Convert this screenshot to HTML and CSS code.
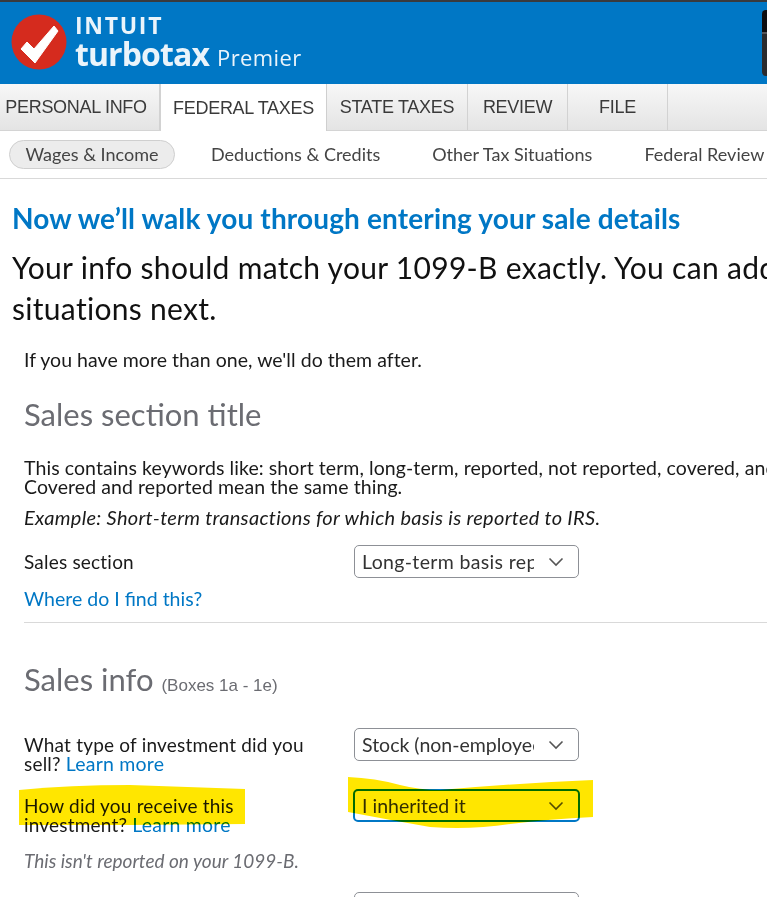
FILE: index.html
```html
<!DOCTYPE html>
<html lang="en">
<head>
<meta charset="utf-8">
<title>TurboTax Premier</title>
<link rel="stylesheet" href="styles.css">
</head>
<body>
<div class="page">
  <header class="brand">
    <svg class="logo" width="56" height="56" viewBox="0 0 56 56" aria-hidden="true">
      <circle cx="28" cy="28" r="27.5" fill="#d52b1e"/>
      <path d="M10 35 L16 28 L23 35 L43 12 L47 17 L24 49 Z" fill="#fff" stroke="#fff" stroke-width="1" stroke-linejoin="round"/>
    </svg>
    <div class="wordmark">
      <div class="intuit">INTUIT</div>
      <div class="product"><span class="turbotax">turbotax</span><span class="premier">Premier</span></div>
    </div>
    <span class="corner"></span>
  </header>
  <nav class="tabs">
    <a class="tab tab-personal">PERSONAL INFO</a>
    <a class="tab tab-federal active">FEDERAL TAXES</a>
    <a class="tab tab-state">STATE TAXES</a>
    <a class="tab tab-review">REVIEW</a>
    <a class="tab tab-file">FILE</a>
  </nav>
  <nav class="subnav">
    <a class="pill">Wages &amp; Income</a>
    <a class="sub sub-ded">Deductions &amp; Credits</a>
    <a class="sub sub-other">Other Tax Situations</a>
    <a class="sub sub-review">Federal Review</a>
  </nav>
  <main class="content">
    <h1 class="title">Now we’ll walk you through entering your sale details</h1>
    <p class="lead">Your info should match your 1099-B exactly. You can add more sales or other situations next.</p>
    <section class="form">
      <p class="more">If you have more than one, we'll do them after.</p>
      <h2 class="section-title">Sales section title</h2>
      <p class="keywords">This contains keywords like: short term, long-term, reported, not reported, covered, and noncovered. Covered and reported mean the same thing.</p>
      <p class="example">Example: Short-term transactions for which basis is reported to IRS.</p>
      <div class="row row-sales">
        <label class="label">Sales section</label>
        <div class="select"><span class="value spaced">Long-term basis reported</span><svg class="chev" width="16" height="10" viewBox="0 0 16 10"><path d="M1.5 1.5 L8 8 L14.5 1.5" fill="none" stroke="#555" stroke-width="1.6"/></svg></div>
      </div>
      <a class="link find">Where do I find this?</a>
      <hr class="rule">
      <h2 class="section-title info">Sales info <small class="boxes">(Boxes 1a - 1e)</small></h2>
      <div class="row row-type">
        <label class="label two">What type of investment did you sell? <a class="link">Learn more</a></label>
        <div class="select"><span class="value">Stock (non-employee)</span><svg class="chev" width="16" height="10" viewBox="0 0 16 10"><path d="M1.5 1.5 L8 8 L14.5 1.5" fill="none" stroke="#555" stroke-width="1.6"/></svg></div>
      </div>
      <div class="row row-how">
        <label class="label two">How did you receive this investment? <a class="link">Learn more</a></label>
        <div class="select focus"><span class="value">I inherited it</span><svg class="chev" width="16" height="10" viewBox="0 0 16 10"><path d="M1.5 1.5 L8 8 L14.5 1.5" fill="none" stroke="#555" stroke-width="1.6"/></svg></div>
      </div>
      <p class="note">This isn't reported on your 1099-B.</p>
      <div class="select cut"></div>
    </section>
  </main>
  <svg class="marker" width="767" height="913" viewBox="0 0 767 913" aria-hidden="true">
    <path d="M19 790 Q70 785 130 785 L245 789 L245 824 L130 825 L19 825 Z" fill="#ffe600"/>
    <path d="M348 777 Q375 778 400 785 Q420 790 440 790 Q520 783 593 780 L593 817 Q550 819 510 824 Q470 830 430 827 Q390 820 348 812 Z" fill="#ffe600"/>
  </svg>
</div>
</body>
</html>
```
FILE: styles.css
```css
* { box-sizing: border-box; }
html, body { margin: 0; padding: 0; background: #fff; }
body { font-family: Lato, "Open Sans", sans-serif; color: #1a1a1a; }
.page { position: relative; width: 767px; height: 913px; overflow: hidden; }

.brand { position: relative; display: flex; align-items: flex-start; height: 84px; padding: 12px 0 0 11px; gap: 8px; background: #0077c5; border-top: 2px solid #393a3d; }
.logo { flex: none; }
.wordmark { color: #eaf4fb; font-family: "Open Sans", sans-serif; }
.intuit { font-size: 23px; line-height: 22px; font-weight: 700; letter-spacing: 1.7px; }
.product { display: flex; align-items: baseline; gap: 8px; margin-top: 0; }
.turbotax { font-size: 32px; line-height: 36px; font-weight: 700; letter-spacing: -0.9px; }
.premier { font-size: 22px; font-weight: 400; letter-spacing: 0.4px; }
.corner { position: absolute; left: 762px; top: 8px; width: 10px; height: 66px; border-radius: 4px; background: linear-gradient(#0d0d10 0 34%, #55565a 34% 36%, #2a2b2e 36%); }

.tabs { display: flex; height: 47px; background: linear-gradient(#f7f7f7, #e4e4e4); border-bottom: 1px solid #d4d4d4; font-family: "Liberation Sans", Arial, sans-serif; font-size: 18px; color: #3a3a3a; }
.tab { display: flex; align-items: center; justify-content: center; border-right: 1px solid #d2d2d2; height: 46px; letter-spacing: -0.3px; }
.tab-personal { width: 160px; padding-right: 7px; }
.tab-federal { width: 167px; background: #fff; height: 47px; border-right: 1px solid #cfcfcf; border-left: 1px solid #d2d2d2; padding-top: 2px; }
.tab-state { width: 141px; }
.tab-review { width: 100px; }
.tab-file { width: 100px; }

.subnav { position: relative; display: flex; align-items: center; height: 48px; padding-bottom: 1px; border-bottom: 1px solid #d9d9d9; font-size: 18px; color: #444; white-space: nowrap; padding-left: 9px; }
.pill { width: 166px; height: 29px; border-radius: 15px; display: flex; align-items: center; justify-content: center; background: #ececec; border: 1px solid #cfcfcf; flex: none; }
.sub-ded { margin-left: 36px; }
.sub-other { margin-left: 52px; }
.sub-review { margin-left: 52px; }

.content { padding: 0 0 0 12px; height: 718px; overflow: hidden; }
.title { margin: 23px 0 0; font-size: 28px; line-height: 32px; font-weight: 700; color: #0077c5; white-space: nowrap; letter-spacing: 0.14px; }
.lead { margin: 13px 0 0; width: 1060px; font-size: 30px; line-height: 41px; color: #111; letter-spacing: 0.3px; }

.form { padding-left: 12px; width: 900px; }
.more { margin: 19px 0 0; font-size: 19.5px; line-height: 24px; letter-spacing: 0.04px; }
.section-title { margin: 24px 0 0; font-size: 31px; line-height: 36px; font-weight: 400; color: #6b6c72; }
.keywords { margin: 26px 0 0; width: 880px; font-size: 19.5px; line-height: 19px; letter-spacing: 0.08px; }
.example { margin: 9px 0 0; font-size: 20px; line-height: 24px; font-style: italic; letter-spacing: 0.3px; }

.row { display: flex; align-items: flex-start; }
.row-sales { margin-top: 16px; }
.label { width: 330px; flex: none; padding-top: 7px; font-size: 19px; line-height: 19px; letter-spacing: 0.2px; }
.two { width: 290px; margin-right: 40px; }
.select { display: flex; align-items: center; justify-content: space-between; width: 225px; height: 33px; padding: 0 14px 0 7px; border: 1px solid #8d9096; border-radius: 5px; background: #fff; font-size: 19.5px; color: #333; }
.value { display: block; width: 172px; overflow: hidden; white-space: nowrap; }
.spaced { letter-spacing: 0.35px; }
.chev { flex: none; }
.focus { border: 2px solid #0077c5; width: 227px; margin-left: -1px; padding-left: 7px; }

.link { color: #0077c5; font-size: 19.5px; }
.find { display: block; margin-top: 9px; line-height: 24px; }
.rule { margin: 11px 0 0; border: 0; border-top: 1px solid #d9d9d9; }
.info { margin-top: 38px; }
.boxes { font-size: 17px; color: #6b6c72; font-family: "Liberation Sans", Arial, sans-serif; }

.row-type { margin-top: 24px; }
.row-how { margin-top: 16px; }
.note { margin: 15px 0 0; font-size: 19px; line-height: 24px; font-style: italic; color: #6b6c72; }
.cut { margin: 19px 0 0 330px; }

.marker { position: absolute; left: 0; top: 0; mix-blend-mode: multiply; pointer-events: none; }
```
